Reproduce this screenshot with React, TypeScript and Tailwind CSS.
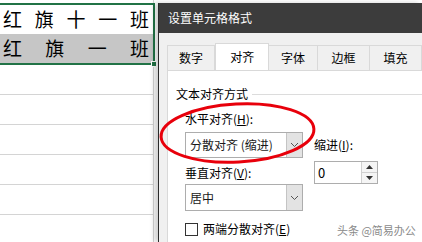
import React from "react";

const cjk = "font-['Segoe_UI','Noto_Sans_CJK_SC',sans-serif]";

const Sel = ({ text, h }: { text: string; h: string }) => (
  <div className={`flex w-[118px] ${h} border border-[#adadad] bg-white`}>
    <div className="flex-1 flex items-center pl-[4px] text-[12px] text-[#1a1a1a]">{text}</div>
    <div className="w-[16px] flex items-center justify-center bg-[#e3e3e3] border-l border-[#c4c4c4]">
      <svg width="9" height="6" viewBox="0 0 9 6">
        <path d="M1 1 L4.5 4.5 L8 1" fill="none" stroke="#555" strokeWidth="1" />
      </svg>
    </div>
  </div>
);

const App = () => {
  const tabs = [
    { t: "数字", w: "w-[51px]" },
    { t: "对齐", w: "w-[57px]", active: true },
    { t: "字体", w: "w-[52px]" },
    { t: "边框", w: "w-[55px]" },
    { t: "填充", w: "w-[55px]" },
  ];

  return (
    <div className={`relative w-[422px] h-[242px] overflow-hidden bg-white ${cjk}`}>
      {/* spreadsheet */}
      <div className="flex flex-col w-[158px]">
        <div className="h-[3px] w-[154px] border-r border-[#d4d4d4]" />
        <div className="relative w-[155px] border-y-2 border-r-2 border-[#217346]">
          <div className="h-[29px] flex items-center justify-between pl-[3px] pr-[4px] text-[19px] text-black bg-white">
            <span>红</span><span>旗</span><span>十</span><span>一</span><span>班</span>
          </div>
          <div className="h-[29px] flex items-center justify-between pl-[3px] pr-[4px] text-[19px] text-black bg-[#c6c6c6]">
            <span>红</span><span>旗</span><span>一</span><span>班</span>
          </div>
          <div className="absolute right-[-4px] bottom-[-4px] w-[6px] h-[6px] bg-[#217346] border border-white" />
        </div>
        {[0, 1, 2, 3, 4, 5].map((i) => (
          <div key={i} className="h-[30px] w-[154px] border-b border-r border-[#d4d4d4]" />
        ))}
      </div>

      {/* dialog window */}
      <div className="absolute left-[158px] top-[3px] right-0 bottom-0 flex flex-col bg-[#f0f0f0] border-l border-[#2b2b2b] shadow-[-4px_0_5px_rgba(0,0,0,0.18)]">
        <div className="h-[30px] flex items-center pl-[9px] bg-[#3c3c3c] text-white text-[12px]">设置单元格格式</div>
        <div className="flex-1 flex flex-col pl-[8px] pt-[10px]">
          <div className="flex items-end h-[27px]">
            {tabs.map((tab) =>
              tab.active ? (
                <div key={tab.t} className={`${tab.w} h-[27px] flex items-center justify-center bg-white border border-b-0 border-[#d9d9d9] text-[12px] text-black`}>
                  {tab.t}
                </div>
              ) : (
                <div key={tab.t} className={`${tab.w} h-[25px] flex items-center justify-center bg-[#f0f0f0] border border-l-0 border-b-0 border-[#d9d9d9] first:border-l text-[12px] text-black`}>
                  {tab.t}
                </div>
              )
            )}
          </div>
          <div className="flex-1 bg-white border-t border-l border-[#d9d9d9] pt-[15px] pl-[8px] text-[12px] text-black">
            <div className="flex items-center gap-[4px] leading-[16px]">
              <span>文本对齐方式</span>
              <div className="flex-1 border-t border-[#dcdcdc]" />
            </div>
            <div className="ml-[9px]">
              <div className="mt-[9px] leading-[16px]">
                水平对齐(<span className="underline">H</span>):
              </div>
              <div className="mt-[5px] flex items-center">
                <Sel text="分散对齐 (缩进)" h="h-[26px]" />
                <div className="ml-[11px] leading-[16px]">
                  缩进(<span className="underline">I</span>):
                </div>
              </div>
              <div className="flex items-start">
                <div className="w-[118px] mt-[7px] leading-[16px]">
                  垂直对齐(<span className="underline">V</span>):
                </div>
                <div className="ml-[11px] mt-[3px] w-[64px] h-[23px] flex border border-[#adadad] bg-white">
                  <div className="flex-1 flex items-center pl-[3px] text-[13px]">0</div>
                  <div className="w-[16px] flex flex-col border-l border-[#d0d0d0]">
                    <div className="flex-1 flex items-center justify-center bg-[#f5f5f5] border-b border-[#d0d0d0]">
                      <svg width="7" height="4" viewBox="0 0 7 4"><path d="M0 4 L3.5 0 L7 4 Z" fill="#333" /></svg>
                    </div>
                    <div className="flex-1 flex items-center justify-center bg-[#f5f5f5]">
                      <svg width="7" height="4" viewBox="0 0 7 4"><path d="M0 0 L3.5 4 L7 0 Z" fill="#333" /></svg>
                    </div>
                  </div>
                </div>
              </div>
              <Sel text="居中" h="h-[27px]" />
              <div className="mt-[10px] flex items-center gap-[5px] leading-[16px]">
                <div className="w-[13px] h-[13px] border border-[#333] bg-white" />
                <span>
                  两端分散对齐(<span className="underline">E</span>)
                </span>
              </div>
            </div>
          </div>
        </div>
      </div>

      {/* watermark */}
      <div className="absolute left-[337px] top-[222px] text-[11px] text-[#8a8a8a] leading-[16px]">头条 @简易办公</div>

      {/* red annotation ellipse */}
      <svg className="absolute left-0 top-0 pointer-events-none" width="422" height="242" viewBox="0 0 422 242">
        <ellipse cx="237.5" cy="133" rx="76.5" ry="29" fill="none" stroke="#e8000b" strokeWidth="3" transform="rotate(-3 237.5 133)" />
      </svg>
    </div>
  );
};

export default App;
